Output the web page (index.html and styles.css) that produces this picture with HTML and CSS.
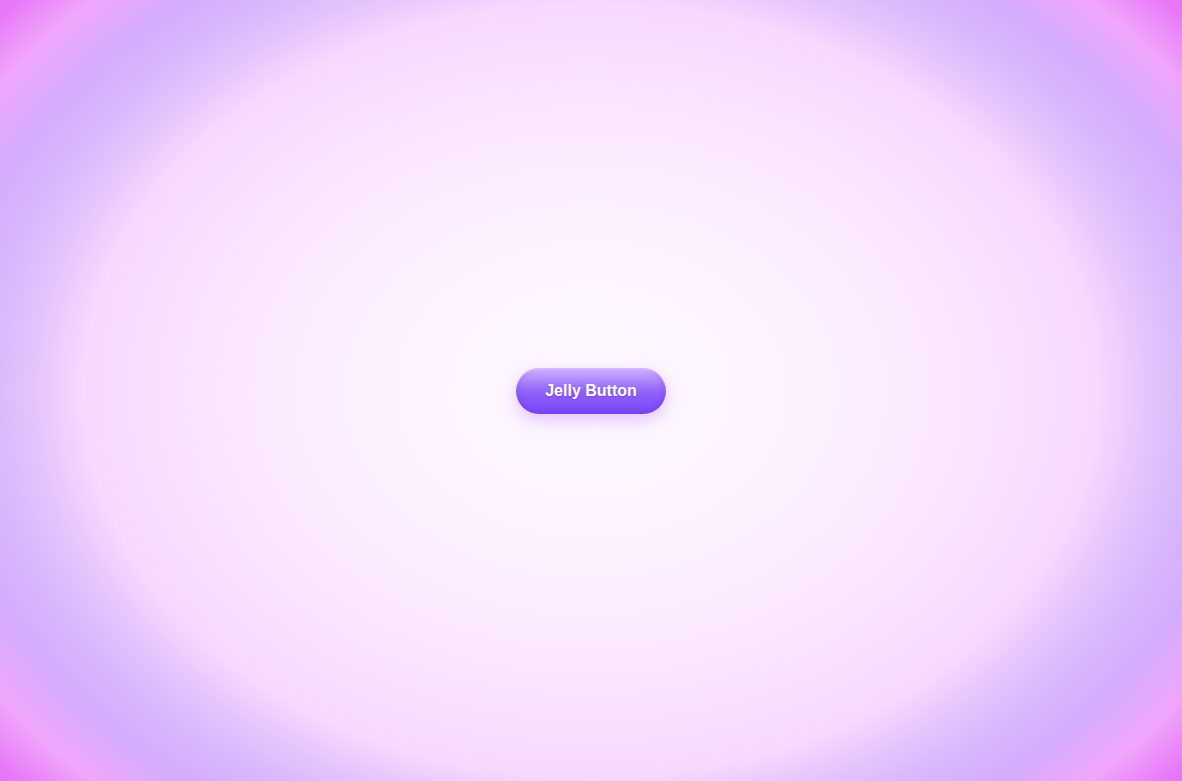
FILE: index.html
```html
<!DOCTYPE html>
<html lang="en">
<head>
<meta charset="utf-8">
<title>Jelly Button</title>
<link rel="stylesheet" href="styles.css">
</head>
<body>
<main class="stage">
  <button class="jelly" type="button"><span class="jelly-label">Jelly Button</span></button>
</main>
</body>
</html>
```

FILE: styles.css
```css
html, body {
  margin: 0;
  padding: 0;
  height: 100%;
}
body {
  font-family: "Liberation Sans", Arial, sans-serif;
  background: radial-gradient(768px 585px at 50% 50%,
    #fdf8ff 0%,
    #fdf4ff 20%,
    #fbebfe 40%,
    #f9e1fe 55%,
    #f7d8fe 66%,
    #e6c6fd 72%,
    #d9b8fc 78%,
    #d4acfd 85%,
    #f0a6fb 93%,
    #e879f9 100%,
    #e46df8 104%);
}
.stage {
  height: 100vh;
  display: flex;
  align-items: center;
  justify-content: center;
}
.jelly {
  position: relative;
  border: 0;
  margin: 0;
  padding: 14px 29px;
  border-radius: 999px;
  font-family: inherit;
  font-size: 16px;
  font-weight: 700;
  line-height: 18px;
  color: #ffffff;
  cursor: pointer;
  background: linear-gradient(180deg, #c4a2fc 0%, #b08afb 18%, #9e74fa 35%, #8c5cf9 60%, #7c49f8 100%);
  box-shadow:
    inset 0 2px 1px rgba(255, 255, 255, 0.3),
    inset 0 -3px 6px rgba(100, 40, 230, 0.3),
    0 6px 16px rgba(178, 100, 247, 0.35);
  text-shadow: 0 1px 2px rgba(80, 30, 170, 0.3);
  overflow: hidden;
}
.jelly::before {
  content: "";
  position: absolute;
  left: 4px;
  right: 4px;
  top: 2px;
  height: 45%;
  border-radius: 999px 999px 40% 40%;
  background: linear-gradient(180deg, rgba(255, 255, 255, 0.16), rgba(255, 255, 255, 0));
}
.jelly-label {
  position: relative;
}
```
